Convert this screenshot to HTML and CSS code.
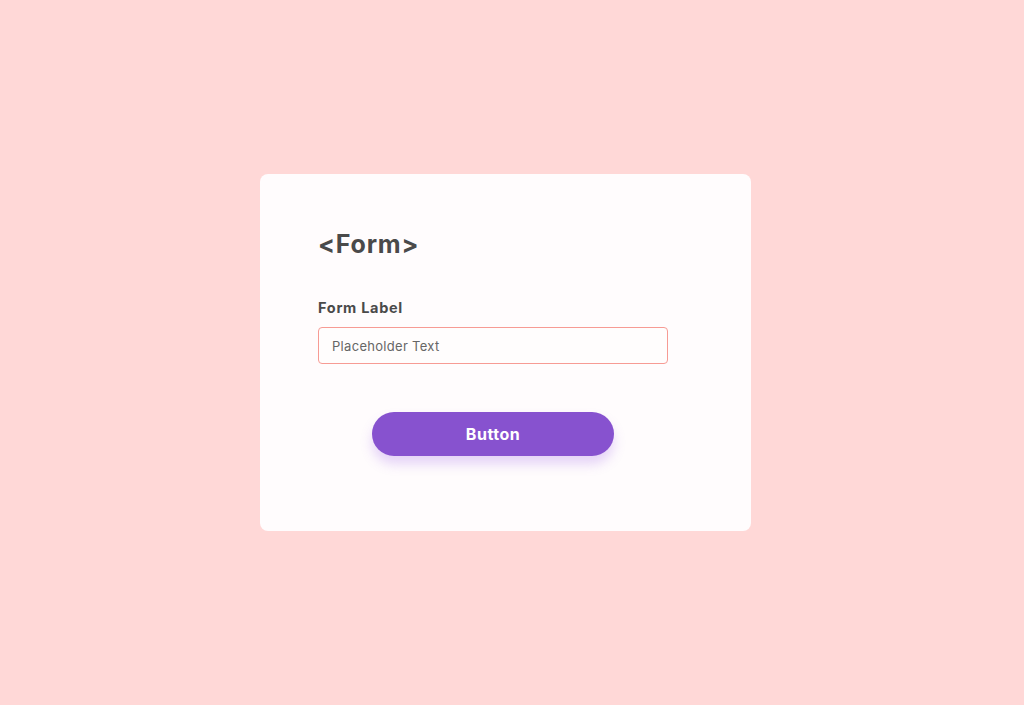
FILE: index.html
```html
<!DOCTYPE html>
<html lang="en">
<head>
<meta charset="utf-8">
<title>Form</title>
<link rel="stylesheet" href="styles.css">
</head>
<body>
<main class="page">
  <form class="card">
    <h1 class="title">&lt;Form&gt;</h1>
    <label class="label" for="field">Form Label</label>
    <input class="input" id="field" type="text" placeholder="Placeholder Text">
    <div class="actions">
      <button class="button" type="button">Button</button>
    </div>
  </form>
</main>
</body>
</html>
```
FILE: styles.css
```css
* { box-sizing: border-box; }
html, body {
  margin: 0;
  height: 100%;
}
body {
  background: #ffd8d7;
  font-family: "Inter", "Noto Sans", sans-serif;
  color: #4a4a4a;
}
.page {
  height: 705px;
  display: flex;
  justify-content: flex-start;
  padding: 174px 0 0 260px;
}
.card {
  width: 491px;
  height: 357px;
  background: #fffcfd;
  border-radius: 8px;
  padding: 55px 84px 0 58px;
  display: flex;
  flex-direction: column;
  align-items: flex-start;
}
.title {
  margin: 0;
  font-size: 25px;
  font-weight: 700;
  line-height: 30px;
  letter-spacing: 0.8px;
  color: #4a4a4a;
}
.label {
  margin-top: 40px;
  font-size: 14.5px;
  font-weight: 700;
  line-height: 18px;
  letter-spacing: 0.7px;
  color: #4a4a4a;
}
.input {
  margin-top: 10px;
  width: 350px;
  height: 37px;
  border: 1px solid #f79b94;
  border-radius: 4px;
  background: #fffdfd;
  padding: 0 13px;
  font-family: inherit;
  font-size: 13px;
  letter-spacing: 0.3px;
  color: #555;
  outline: none;
}
.input::placeholder {
  color: #666;
}
.actions {
  width: 350px;
  display: flex;
  justify-content: center;
  margin-top: 48px;
}
.button {
  width: 242px;
  height: 44px;
  border: 0;
  border-radius: 22px;
  background: #8752cf;
  color: #fff;
  font-family: inherit;
  font-size: 16px;
  font-weight: 700;
  letter-spacing: 0.5px;
  box-shadow: 0 8px 12px rgba(150, 90, 230, 0.25);
  cursor: pointer;
}
```
